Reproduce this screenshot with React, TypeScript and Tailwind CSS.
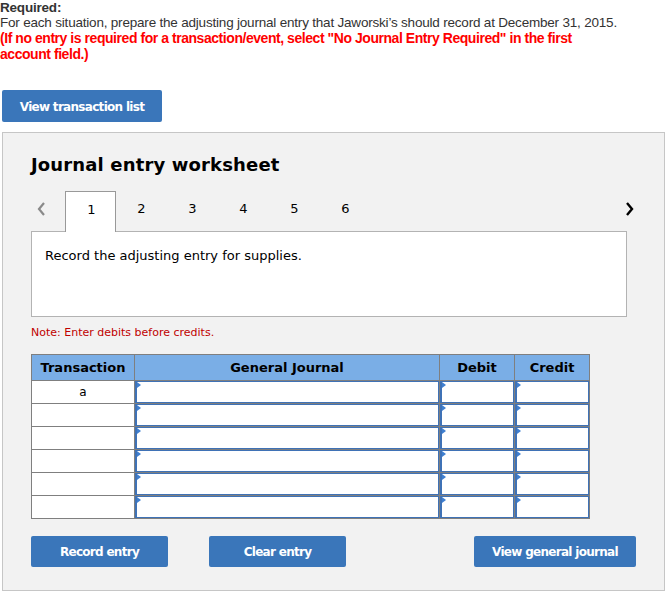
import React from 'react';

const rows = ['a', '', '', '', '', ''];

function InputCell() {
  return (
    <td className="border border-[#7f7f7f] p-0 h-[23px]">
      <div className="relative h-[22px] bg-white border border-[#3f72b6] border-l-2">
        <span className="absolute left-0 top-0 w-0 h-0 border-y-[3px] border-y-transparent border-l-[4px] border-l-[#3f7fd0]" />
      </div>
    </td>
  );
}

export default function App() {
  return (
    <div className="w-[668px] h-[594px] bg-white overflow-hidden">
      {/* Instructions */}
      <div className="font-['Liberation_Sans',Arial,sans-serif] text-[13.5px] leading-[15px] tracking-[-0.2px]">
        <p className="font-bold text-[#333]">Required:</p>
        <p className="text-[#333]">For each situation, prepare the adjusting journal entry that Jaworski’s should record at December 31, 2015.</p>
        <p className="font-bold text-[#ff0000] w-[600px] text-[14px] tracking-[-0.45px] leading-[16px]">
          (If no entry is required for a transaction/event, select "No Journal Entry Required" in the first account field.)
        </p>
      </div>

      <button
        type="button"
        className="ml-[2px] mt-[28px] w-[160px] h-[32px] rounded-[2px] bg-[#3a76ba] text-white font-['DejaVu_Sans',Verdana,sans-serif] font-bold text-[12px] tracking-[-0.7px] pt-[2px]"
      >
        View transaction list
      </button>

      {/* Worksheet panel */}
      <div className="ml-[2px] mt-[10px] w-[663px] h-[459px] border border-[#c6c6c6] bg-[#f2f2f2] pl-[28px] pt-[20px] font-['DejaVu_Sans',Verdana,sans-serif]">
        <h2 className="text-[18px] leading-[24px] font-bold text-black tracking-[0.15px]">Journal entry worksheet</h2>

        {/* Tabs */}
        <div className="mt-[14px] flex items-start h-[41px] w-[601px] relative z-10">
          <div className="w-[35px] h-[36px] flex items-center justify-start pl-[5px]">
            <svg width="10" height="16" viewBox="0 0 10 16">
              <path d="M8 2 L3 8 L8 14" fill="none" stroke="#8a8a8a" strokeWidth="2.2" />
            </svg>
          </div>
          <div className="w-[51px] h-[41px] bg-white border border-[#999] border-b-0 flex justify-center pt-[10px] pl-[2px] text-[13px] leading-[16px] text-black -ml-[1px]">1</div>
          {['2', '3', '4', '5', '6'].map((n) => (
            <div key={n} className="w-[51px] h-[36px] flex justify-center pt-[10px] text-[13px] leading-[16px] text-black">{n}</div>
          ))}
          <div className="ml-auto w-[16px] h-[36px] flex items-center justify-center -mr-[6px]">
            <svg width="10" height="16" viewBox="0 0 10 16">
              <path d="M2 2 L7 8 L2 14" fill="none" stroke="#000" strokeWidth="2.4" />
            </svg>
          </div>
        </div>
        <div className="-mt-[1px] w-[596px] h-[86px] bg-white border border-[#b3b3b3] px-[13px] pt-[14px] text-[13px] text-black">
          Record the adjusting entry for supplies.
        </div>

        <p className="mt-[9px] text-[11px] leading-[14px] text-[#c00000]">Note: Enter debits before credits.</p>

        {/* Journal table */}
        <table className="mt-[14px] border-collapse w-[558px] table-fixed">
          <thead>
            <tr className="h-[26px] bg-[#7aaee6]">
              <th className="w-[103px] border border-[#7f7f7f] text-[13px] font-bold text-black">Transaction</th>
              <th className="w-[305px] border border-[#7f7f7f] text-[13px] font-bold text-black">General Journal</th>
              <th className="w-[75px] border border-[#7f7f7f] text-[13px] font-bold text-black">Debit</th>
              <th className="w-[75px] border border-[#7f7f7f] text-[13px] font-bold text-black">Credit</th>
            </tr>
          </thead>
          <tbody>
            {rows.map((r, i) => (
              <tr key={i} className="h-[23px]">
                <td className="border border-[#7f7f7f] bg-white text-center text-[12px] text-black">{r}</td>
                <InputCell />
                <InputCell />
                <InputCell />
              </tr>
            ))}
          </tbody>
        </table>

        {/* Actions */}
        <div className="mt-[17px] w-[605px] flex items-center text-[12px] tracking-[-0.7px]">
          <button type="button" className="w-[137px] h-[31px] rounded-[2px] bg-[#3a76ba] text-white font-bold pt-[1px]">Record entry</button>
          <button type="button" className="ml-[41px] w-[137px] h-[31px] rounded-[2px] bg-[#3a76ba] text-white font-bold pt-[1px]">Clear entry</button>
          <button type="button" className="ml-auto w-[162px] h-[31px] rounded-[2px] bg-[#3a76ba] text-white font-bold pt-[1px]">View general journal</button>
        </div>
      </div>
    </div>
  );
}
